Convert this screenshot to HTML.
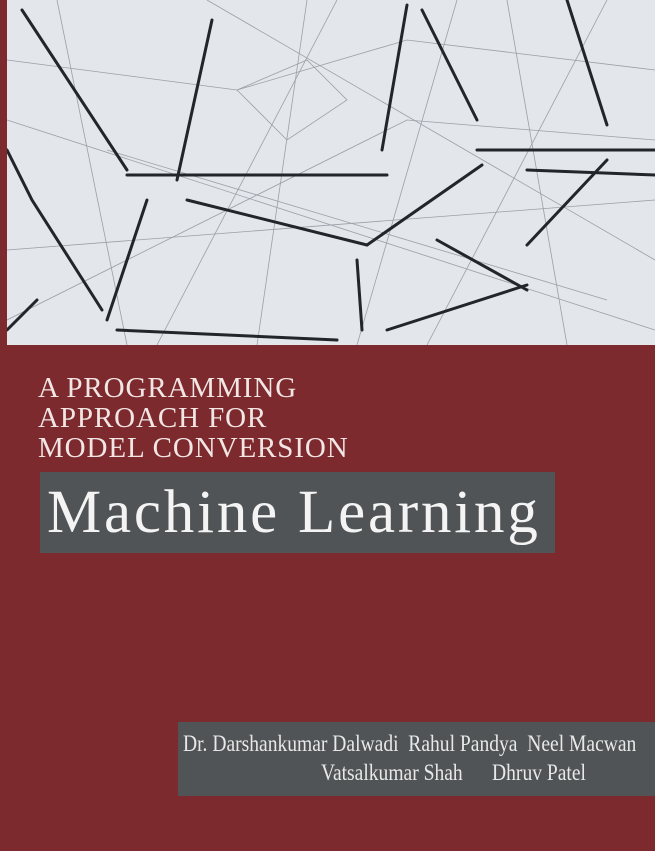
<!DOCTYPE html>
<html><head><meta charset="utf-8"><style>
html,body{margin:0;padding:0}
body{width:655px;height:851px;background:#7d2a2e;position:relative;overflow:hidden;font-family:"Liberation Serif",serif}
#img{position:absolute;left:7px;top:0;width:648px;height:345px}
.sub{position:absolute;left:38px;color:#f1e6e4;font-size:29px;line-height:30px;top:373px;letter-spacing:0.9px}
#title{position:absolute;left:40px;top:472px;width:515px;height:81px;background:#515456;color:#f4f4f4;font-size:61px;line-height:81px;box-sizing:border-box;padding-left:7px;letter-spacing:2.8px}
#auth{position:absolute;left:178px;top:722px;width:477px;height:74px;background:#515456;color:#e8e8e8;font-size:23px}
#auth div{position:absolute;white-space:nowrap;transform-origin:0 0;transform:scaleX(0.85)}
</style></head><body>
<svg id="img" viewBox="0 0 648 345" xmlns="http://www.w3.org/2000/svg">
<rect width="648" height="345" fill="#e3e6eb"/>
<g stroke="#9aa0a8" stroke-width="0.8" fill="none">
<path d="M0 60 L230 90 L400 40 L648 70"/><path d="M50 0 L120 345"/><path d="M300 0 L250 345"/><path d="M500 0 L560 345"/><path d="M0 250 L648 200"/><path d="M100 150 L600 300"/><path d="M200 0 L648 260"/><path d="M0 320 L400 120 L648 140"/><path d="M350 345 L450 0"/><path d="M0 120 L648 330"/><path d="M150 345 L330 0"/><path d="M230 90 L280 140 L340 100 L300 60 Z"/><path d="M600 0 L420 345"/>
</g>
<g stroke="#22262b" stroke-width="3" fill="none" stroke-linecap="round">
<path d="M15 10 L120 170"/><path d="M205 20 L170 180"/><path d="M120 175 L380 175"/><path d="M0 150 L25 200 L95 310"/><path d="M110 330 L330 340"/><path d="M140 200 L100 320"/><path d="M180 200 L360 245"/><path d="M400 5 L375 150"/><path d="M415 10 L470 120"/><path d="M560 0 L600 125"/><path d="M470 150 L610 150 L648 150"/><path d="M600 160 L520 245"/><path d="M360 245 L475 165"/><path d="M430 240 L520 290"/><path d="M350 260 L355 330"/><path d="M380 330 L520 285"/><path d="M520 170 L648 175"/><path d="M30 300 L0 330"/>
</g>
</svg>
<div class="sub">A PROGRAMMING<br>APPROACH FOR<br>MODEL CONVERSION</div>
<div id="title">Machine Learning</div>
<div id="auth">
<div style="left:5px;top:9px">Dr. Darshankumar Dalwadi&nbsp; Rahul Pandya&nbsp; Neel Macwan</div>
<div style="left:143px;top:38px">Vatsalkumar Shah&nbsp;&nbsp;&nbsp;&nbsp;&nbsp; Dhruv Patel</div>
</div>
</body></html>
